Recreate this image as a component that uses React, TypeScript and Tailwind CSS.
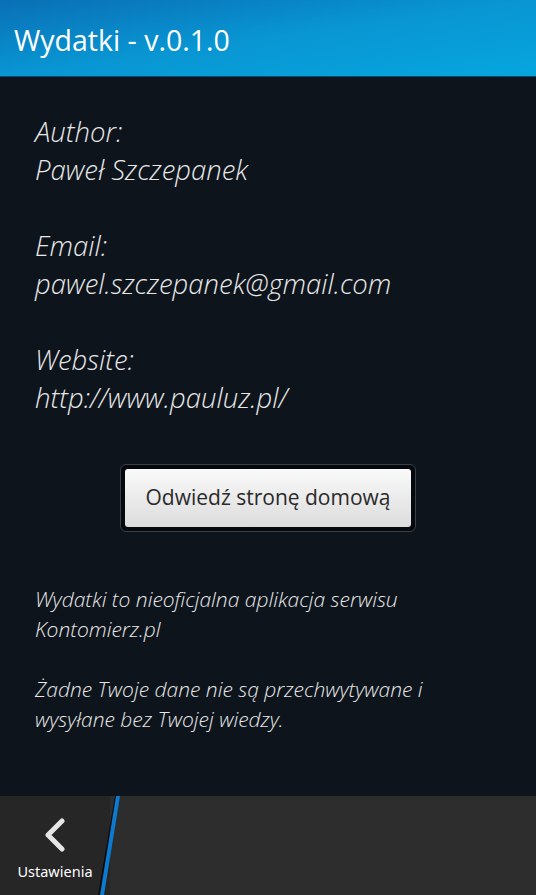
const App = () => {
    return (
        <div className="w-[536px] h-[895px] flex flex-col bg-[#0d141c] overflow-hidden" style={{ fontFamily: '"Open Sans", "Noto Sans", sans-serif' }}>
            <div className="h-[77px] shrink-0 flex items-center px-[14px] bg-gradient-to-br from-[#0a6fb5] via-[#0996d3] to-[#06a6de] border-b border-[#0a4a70]">
                <h1 className="text-white text-[28.5px] leading-none pt-[4px]">Wydatki - v.0.1.0</h1>
            </div>
            <div className="flex-1 flex flex-col px-[35px] pt-[36px]">
                <div className="text-[#e8e8e8] text-[27.5px] leading-[38px] italic font-light">
                    <p>Author:</p>
                    <p>Paweł Szczepanek</p>
                    <p>&nbsp;</p>
                    <p>Email:</p>
                    <p>pawel.szczepanek@gmail.com</p>
                    <p>&nbsp;</p>
                    <p>Website:</p>
                    <p>http://www.pauluz.pl/</p>
                </div>
                <div className="flex justify-center mt-[47px]">
                    <div className="p-[4px] rounded-[6px] border border-[#3a4048] bg-[#05080c]">
                        <button className="w-[286px] h-[58px] rounded-[3px] bg-gradient-to-b from-[#fafafa] to-[#dcdcdc] text-[#2a2a2a] text-[21px]">
                            Odwiedź stronę domową
                        </button>
                    </div>
                </div>
                <div className="mt-[52px] text-[#e8e8e8] text-[21px] leading-[30px] italic font-light">
                    <p>Wydatki to nieoficjalna aplikacja serwisu<br />Kontomierz.pl</p>
                    <p className="mt-[30px]">Żadne Twoje dane nie są przechwytywane i<br />wysyłane bez Twojej wiedzy.</p>
                </div>
            </div>
            <div className="relative h-[99px] shrink-0 flex bg-[#2d2d2d]">
                <div className="w-[110px] flex flex-col items-center bg-[#262626]">
                    <svg width="26" height="34" viewBox="0 0 26 34" className="mt-[22px]">
                        <path d="M20 3 L6 17 L20 31" stroke="#e6e6e6" strokeWidth="5" fill="none" strokeLinecap="round" strokeLinejoin="round" />
                    </svg>
                    <span className="mt-[12px] text-white text-[14.5px] leading-none" style={{ fontFamily: '"Noto Sans", sans-serif' }}>Ustawienia</span>
                </div>
                <svg className="absolute left-[96px] top-0" width="26" height="99" viewBox="0 0 26 99">
                    <polygon points="19,0 23,0 6,99 2,99" fill="#0a0a0a" />
                    <polygon points="20,0 24,0 8,99 4,99" fill="#0a7bd0" />
                </svg>
            </div>
        </div>
    );
};

export default App;
